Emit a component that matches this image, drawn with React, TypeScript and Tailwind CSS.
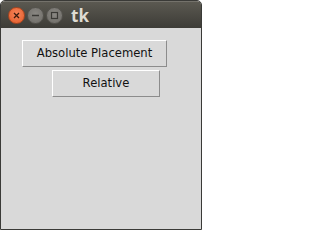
import React from "react";

function TitleButton({ kind }: { kind: "close" | "min" | "max" }) {
  const isClose = kind === "close";
  return (
    <div
      className={
        "flex h-[17px] w-[17px] items-center justify-center rounded-full border " +
        (isClose
          ? "border-[#a9451f] bg-[radial-gradient(circle_at_50%_40%,#f7845a,#e35a27)]"
          : "border-[#55534e] bg-[radial-gradient(circle_at_50%_40%,#8a8883,#6c6a65)]")
      }
    >
      <svg width="9" height="9" viewBox="0 0 9 9">
        {kind === "close" && (
          <path d="M2 2 L7 7 M7 2 L2 7" stroke="#3b1a0c" strokeWidth="1.3" />
        )}
        {kind === "min" && <path d="M1 4.5 H8" stroke="#3a3935" strokeWidth="1.4" />}
        {kind === "max" && (
          <rect x="1.5" y="1.5" width="6" height="6" fill="none" stroke="#3a3935" strokeWidth="1.2" />
        )}
      </svg>
    </div>
  );
}

function TkButton({ label, className }: { label: string; className: string }) {
  return (
    <button
      className={
        "flex h-[27px] items-center justify-center border border-t-white border-l-white border-r-[#8c8c8c] border-b-[#8c8c8c] bg-[#d9d9d9] text-[11.6px] text-[#111] " +
        className
      }
      style={{ fontFamily: '"DejaVu Sans", Verdana, sans-serif' }}
    >
      {label}
    </button>
  );
}

export default function App() {
  return (
    <div className="h-[230px] w-[202px] bg-white">
      <div className="flex h-full w-full flex-col overflow-hidden rounded-t-[5px] border border-[#3a3a37] bg-[#d9d9d9]">
        <div className="flex h-[27px] shrink-0 items-center border-t border-t-[#74726b] bg-gradient-to-b from-[#5b5951] to-[#3d3c37] pl-[7px]">
          <div className="flex items-center gap-[2px]">
            <TitleButton kind="close" />
            <TitleButton kind="min" />
            <TitleButton kind="max" />
          </div>
          <span
            className="ml-[8px] text-[17px] font-bold leading-none text-[#dfdbd2]"
            style={{ fontFamily: '"Noto Sans", "DejaVu Sans", sans-serif' }}
          >
            tk
          </span>
        </div>
        <div className="flex flex-1 flex-col items-start">
          <TkButton label="Absolute Placement" className="ml-[21px] mt-[12px] w-[145px]" />
          <TkButton label="Relative" className="ml-[51px] mt-[3px] w-[108px]" />
        </div>
      </div>
    </div>
  );
}
